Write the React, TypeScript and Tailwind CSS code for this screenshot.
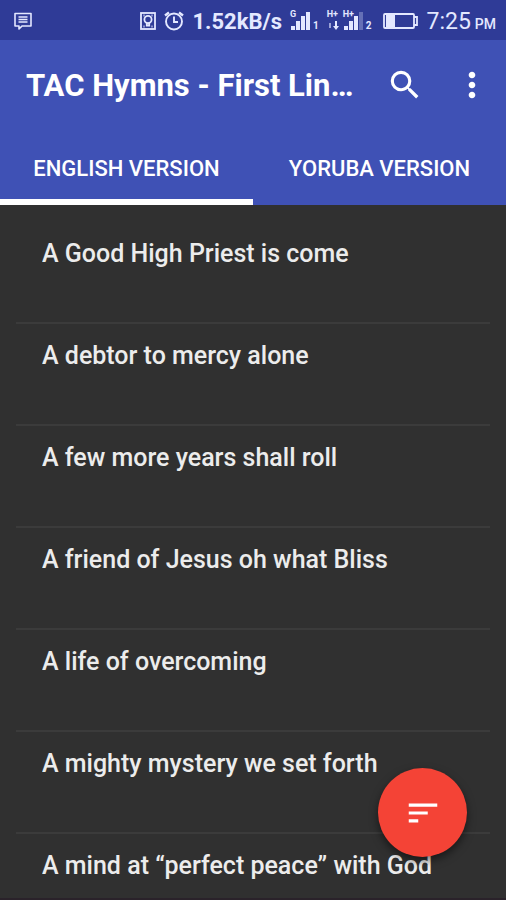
import React, { useState } from "react";

const hymns = [
  "A Good High Priest is come",
  "A debtor to mercy alone",
  "A few more years shall roll",
  "A friend of Jesus oh what Bliss",
  "A life of overcoming",
  "A mighty mystery we set forth",
  "A mind at “perfect peace” with God",
];

const tabs = ["English Version", "Yoruba Version"];

const MessageIcon = () => (
  <svg width="18" height="18" viewBox="0 0 18 18" fill="none" stroke="currentColor" strokeWidth="1.6">
    <path d="M1 1.5h16v12.5H8l-3 3v-3H1z" strokeLinejoin="round" />
    <path d="M4.5 5h9M4.5 7.5h9M4.5 10h9" strokeWidth="1.5" />
  </svg>
);

const BadgeIcon = () => (
  <svg width="16" height="18" viewBox="0 0 16 18" fill="none" stroke="currentColor" strokeWidth="1.8">
    <rect x="1" y="1" width="14" height="16" />
    <circle cx="8" cy="7.5" r="3.6" />
    <path d="M6.8 10.5v3h2.4v-3" />
    <path d="M3.5 3.5h1M11.5 3.5h1M3.5 14.5h1M11.5 14.5h1" />
  </svg>
);

const AlarmIcon = () => (
  <svg width="20" height="20" viewBox="0 0 20 20" fill="none" stroke="currentColor" strokeWidth="1.9">
    <circle cx="10" cy="10.5" r="8" />
    <path d="M10 5.5V11h4" />
    <path d="M1 4.5L5 1.5M15 1.5l4 3" strokeWidth="2.4" />
  </svg>
);

const BarsIcon = ({ level }: { level: number }) => (
  <svg width="21" height="18" viewBox="0 0 21 18" fill="currentColor">
    {[4, 9, 14, 18].map((h, i) => (
      <rect key={h} x={i * 5 + 1} y={18 - h} width="4" height={h} opacity={i < level ? 1 : 0.3} />
    ))}
  </svg>
);

const BatteryIcon = () => (
  <svg width="35" height="16" viewBox="0 0 35 16">
    <rect x="1" y="1" width="30" height="14" rx="1" fill="none" stroke="currentColor" strokeWidth="1.8" />
    <rect x="3" y="2" width="9" height="12" fill="currentColor" />
    <path d="M31 4h3v8h-3" fill="none" stroke="currentColor" strokeWidth="1.8" />
  </svg>
);

const StatusBar = () => (
  <div className="flex h-10 shrink-0 items-center justify-between bg-[#2f3b97] pt-0.5 pr-2.5 pl-3.5 text-[#e4e8ff]">
    <MessageIcon />
    <div className="flex items-center">
      <BadgeIcon />
      <span className="ml-2">
        <AlarmIcon />
      </span>
      <span className="ml-2 pt-0.5 text-[22px] leading-6 font-bold">1.52kB/s</span>
      <span className="relative ml-2 flex items-end">
        <span className="absolute -top-0.5 left-0 text-[9px] leading-2 font-bold">G</span>
        <BarsIcon level={4} />
        <span className="ml-0.5 text-[10px] leading-2 font-bold">1</span>
      </span>
      <span className="relative ml-2 flex items-end">
        <span className="absolute -top-0.5 left-0 text-[9px] leading-2 font-bold">H+</span>
        <svg width="12" height="9" viewBox="0 0 12 9" fill="currentColor">
          <path d="M2 2h2v5H2z" opacity="0.6" />
          <path d="M8 0h2v5h2L9 9 6 5h2z" />
        </svg>
        <span className="relative ml-1 flex">
          <span className="absolute -top-0.5 left-0 text-[9px] leading-2 font-bold">H+</span>
          <BarsIcon level={3} />
        </span>
        <span className="ml-0.5 text-[10px] leading-2 font-bold">2</span>
      </span>
      <span className="ml-3">
        <BatteryIcon />
      </span>
      <span className="ml-2 pt-0.5 text-[23px] leading-6">7:25</span>
      <span className="ml-1 pt-1.5 text-[14px] leading-5 font-medium">PM</span>
    </div>
  </div>
);

const App = () => {
  const [active, setActive] = useState(0);

  return (
    <div className="flex h-screen flex-col overflow-hidden border-b-2 border-[#2a222a] bg-[#303030] font-[Roboto,sans-serif] text-white">
      <StatusBar />

      <header className="shrink-0 bg-[#3f51b5]">
        <div className="flex h-[90px] items-center pr-3.5 pl-[26px]">
          <h1 className="min-w-0 flex-1 truncate pt-0.5 text-[31px] leading-10 font-bold">
            TAC Hymns - First Lin…
          </h1>
          <button type="button" aria-label="Search" className="shrink-0">
            <svg width="38" height="38" viewBox="0 0 24 24" fill="currentColor">
              <path d="M15.5 14h-.79l-.28-.27A6.471 6.471 0 0 0 16 9.5 6.5 6.5 0 1 0 9.5 16c1.61 0 3.09-.59 4.23-1.57l.27.28v.79l5 4.99L20.49 19l-4.99-5zm-6 0C7.01 14 5 11.99 5 9.5S7.01 5 9.5 5 14 7.01 14 9.5 11.99 14 9.5 14z" />
            </svg>
          </button>
          <button type="button" aria-label="More options" className="ml-7 shrink-0">
            <svg width="40" height="40" viewBox="0 0 24 24" fill="currentColor">
              <path d="M12 8c1.1 0 2-.9 2-2s-.9-2-2-2-2 .9-2 2 .9 2 2 2zm0 2c-1.1 0-2 .9-2 2s.9 2 2 2 2-.9 2-2-.9-2-2-2zm0 6c-1.1 0-2 .9-2 2s.9 2 2 2 2-.9 2-2-.9-2-2-2z" />
            </svg>
          </button>
        </div>

        <div role="tablist" className="grid grid-cols-2">
          {tabs.map((tab, i) => (
            <button
              key={tab}
              type="button"
              role="tab"
              aria-selected={i === active}
              onClick={() => setActive(i)}
              className={`h-[75px] border-b-6 pt-2 text-[22px] leading-6 font-medium uppercase ${
                i === active ? "border-white" : "border-transparent"
              }`}
            >
              {tab}
            </button>
          ))}
        </div>
      </header>

      <main className="min-h-0 flex-1 overflow-hidden px-4 pt-[17px]">
        <ul>
          {hymns.map((hymn) => (
            <li key={hymn} className="h-[102px] border-b-2 border-[#3b3b3b] pt-4 pl-[26px]">
              <a href="#" className="block truncate text-[25px] leading-8 font-medium text-[#ececec]">
                {hymn}
              </a>
            </li>
          ))}
        </ul>
      </main>

      <button
        type="button"
        aria-label="Sort hymns"
        className="fixed right-[39px] bottom-[43px] flex size-[89px] items-center justify-center rounded-full bg-[#f44336] shadow-[0_4px_8px_rgba(0,0,0,0.5)]"
      >
        <svg width="38" height="38" viewBox="0 0 24 24" fill="currentColor">
          <path d="M3 18h6v-2H3v2zM3 6v2h18V6H3zm0 7h12v-2H3v2z" />
        </svg>
      </button>
    </div>
  );
};

export default App;
